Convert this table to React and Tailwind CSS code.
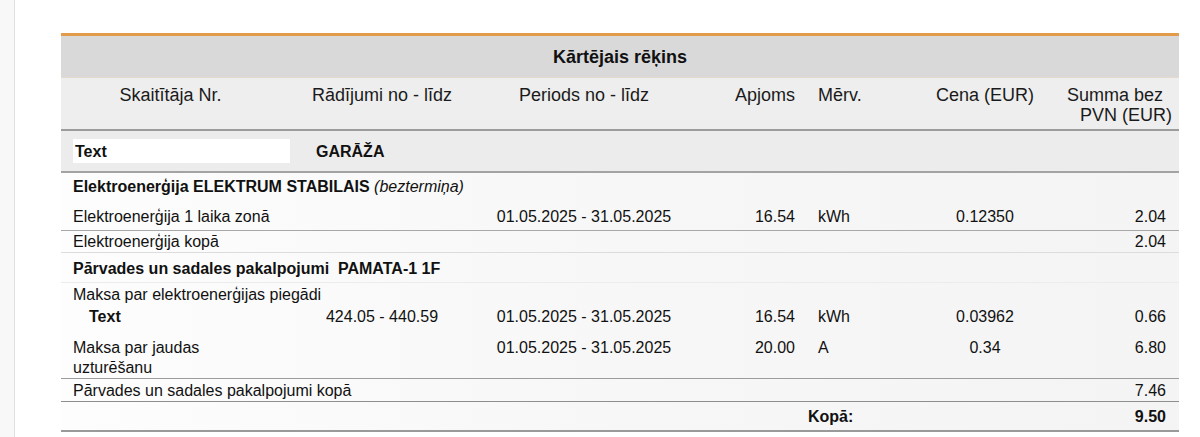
import React from "react";

const G = "grid grid-cols-[219px_204px_200px_121px_100px_160px_114px]";

export default function App() {
  return (
    <div className="flex h-[437px] w-[1200px] overflow-hidden bg-white text-[#111] [font-family:'Liberation_Sans',Arial,sans-serif]">
      <div className="w-[15px] shrink-0 border-r border-[#e0e0e0] bg-[#f8f8f8]" />
      <div className="pl-[46px] pt-[33px]">
        <div className="w-[1118px] border-t-[3px] border-[#e19b4b]">
          {/* title */}
          <div className="flex h-[42px] items-center justify-center border-b border-[#e6dacd] bg-[#d9d9d9] text-[18px] font-bold leading-none">
            Kārtējais rēķins
          </div>
          {/* header */}
          <div className={`${G} h-[53px] border-b-2 border-[#9c9c9c] bg-[#eeeeee] pt-[7px] text-[18px] leading-[20px] text-[#1a1a1a]`}>
            <div className="text-center">Skaitītāja Nr.</div>
            <div className="text-center">Rādījumi no - līdz</div>
            <div className="text-center">Periods no - līdz</div>
            <div className="pr-[10px] text-right">Apjoms</div>
            <div className="pl-[13px]">Mērv.</div>
            <div className="text-center">Cena (EUR)</div>
            <div className="pr-[7px] text-right">
              <div className="pr-[9px]">Summa bez</div>
              <div>PVN (EUR)</div>
            </div>
          </div>
          {/* object row */}
          <div className={`${G} h-[42px] items-center border-b-2 border-[#a3a3a3] bg-[#ececec] text-[16px] font-bold`}>
            <div className="pl-[12px]">
              <div className="flex h-[24px] w-[217px] items-center bg-white pl-[2px] pt-[1px]">Text</div>
            </div>
            <div className="pl-[36px] pt-[1px]">GARĀŽA</div>
          </div>
          {/* body */}
          <div className="bg-linear-to-r from-[#fdfdfd] via-[#f7f7f7] to-[#f4f4f4] text-[16px] leading-[18px]">
            <div className="flex h-[27px] items-center pl-[12px] font-bold">
              Elektroenerģija ELEKTRUM STABILAIS&nbsp;<span className="font-normal italic">(beztermiņa)</span>
            </div>
            <div className={`${G} h-[31px] items-center border-b border-[#a8a8a8] pt-[3px]`}>
              <div className="whitespace-nowrap pl-[12px]">Elektroenerģija 1 laika zonā</div>
              <div />
              <div className="text-center">01.05.2025 - 31.05.2025</div>
              <div className="pr-[10px] text-right">16.54</div>
              <div className="pl-[13px]">kWh</div>
              <div className="text-center">0.12350</div>
              <div className="pr-[13px] text-right">2.04</div>
            </div>
            <div className={`${G} h-[22px] items-center border-b border-[#dcdcdc] pt-[1px]`}>
              <div className="pl-[12px]">Elektroenerģija kopā</div>
              <div />
              <div />
              <div />
              <div />
              <div />
              <div className="pr-[13px] text-right">2.04</div>
            </div>
            <div className="flex h-[30px] items-center whitespace-pre border-b border-[#ececec] pl-[12px] pt-[3px] font-bold">
              Pārvades un sadales pakalpojumi  PAMATA-1 1F
            </div>
            <div className="flex h-[21px] items-center pl-[12px] pt-[2px]">Maksa par elektroenerģijas piegādi</div>
            <div className={`${G} h-[26px] items-center`}>
              <div className="pl-[28px] font-bold">Text</div>
              <div className="text-center">424.05 - 440.59</div>
              <div className="text-center">01.05.2025 - 31.05.2025</div>
              <div className="pr-[10px] text-right">16.54</div>
              <div className="pl-[13px]">kWh</div>
              <div className="text-center">0.03962</div>
              <div className="pr-[13px] text-right">0.66</div>
            </div>
            <div className={`${G} h-[49px] items-start border-b border-[#9c9c9c] pt-[8px] leading-[20px]`}>
              <div className="pl-[12px]">
                Maksa par jaudas
                <br />
                uzturēšanu
              </div>
              <div />
              <div className="text-center">01.05.2025 - 31.05.2025</div>
              <div className="pr-[10px] text-right">20.00</div>
              <div className="pl-[13px]">A</div>
              <div className="text-center">0.34</div>
              <div className="pr-[13px] text-right">6.80</div>
            </div>
            <div className={`${G} h-[23px] items-center border-b border-[#8e8e8e] pt-[1px]`}>
              <div className="whitespace-nowrap pl-[12px]">Pārvades un sadales pakalpojumi kopā</div>
              <div />
              <div />
              <div />
              <div />
              <div />
              <div className="pr-[13px] text-right">7.46</div>
            </div>
            <div className={`${G} h-[30px] items-center border-b-2 border-[#9a9a9a] pt-[2px] font-bold`}>
              <div />
              <div />
              <div />
              <div />
              <div className="pl-[3px]">Kopā:</div>
              <div />
              <div className="pr-[13px] text-right">9.50</div>
            </div>
          </div>
        </div>
      </div>
    </div>
  );
}
